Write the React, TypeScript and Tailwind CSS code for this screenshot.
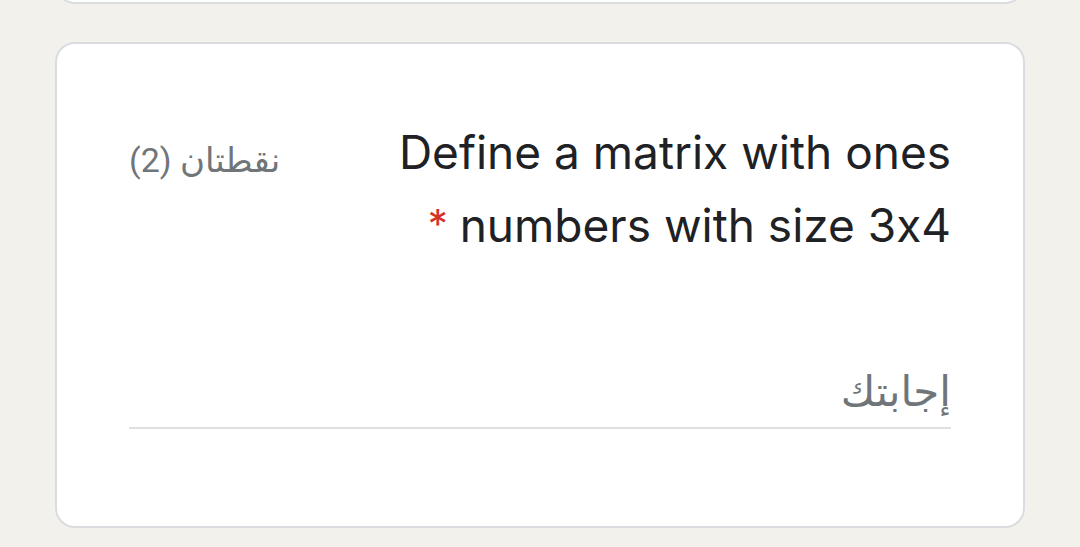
export default function App() {
  return (
    <div
      dir="rtl"
      className="min-h-[547px] bg-[#f2f1eb] overflow-hidden px-[55px]"
      style={{ fontFamily: 'Roboto, "Noto Sans", "DejaVu Sans", sans-serif' }}
    >
      {/* previous question card, only its bottom edge is visible */}
      <div className="h-[100px] -mt-[96px] rounded-[20px] border-2 border-[#dadce0] bg-white" />

      <div className="mt-[38px] rounded-[20px] border-2 border-[#dadce0] bg-white px-[72px] pt-[72px] pb-[97px]">
        <div className="flex items-start justify-between">
          <div
            className="text-[46px] leading-[72px] text-[#202124] [font-feature-settings:'calt'_0]"
            style={{ fontFamily: 'Inter, Roboto, sans-serif' }}
          >
            Define a matrix with ones
            <br />
            numbers with size 3x4
            <span className="text-[#d93025] text-[40px] pr-[12px] align-[4px]">*</span>
          </div>
          <div className="mt-[20px] text-[34px] leading-[48px] text-[#70757a]">نقطتان (2)</div>
        </div>

        <div className="mt-[106px] border-b-2 border-[#e0e0e0] pb-[10px] text-[42px] leading-[50px] text-[#70757a]">
          إجابتك
        </div>
      </div>
    </div>
  )
}
